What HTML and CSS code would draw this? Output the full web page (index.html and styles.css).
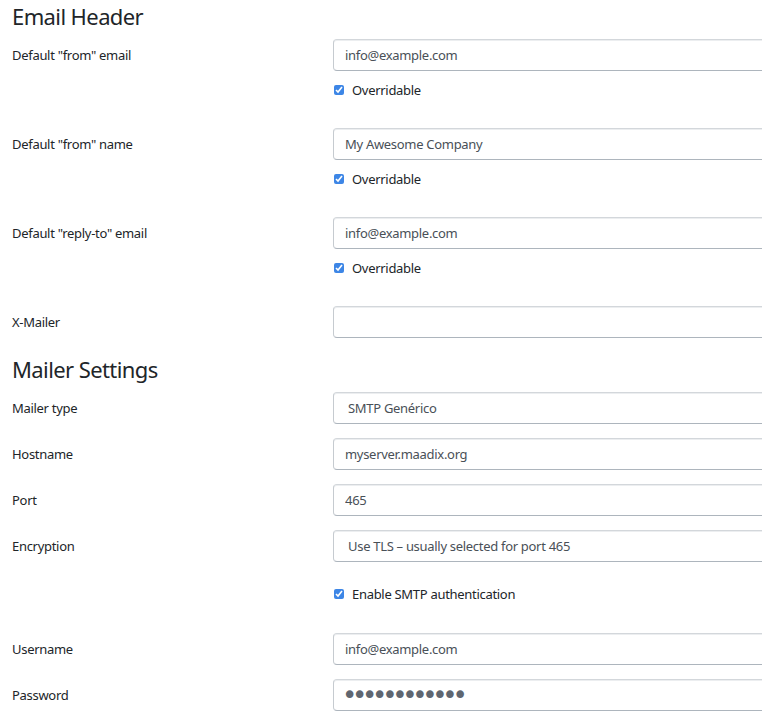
FILE: index.html
```html
<!DOCTYPE html>
<html lang="en">
<head>
    <meta charset="UTF-8">
    <meta name="viewport" content="width=device-width, initial-scale=1.0">
    <title>Mail Settings</title>
    <link rel="stylesheet" href="styles.css">
</head>
<body>
    <main class="settings">
        <h3 class="section-title">Email Header</h3>

        <div class="field field-check">
            <label class="field-label" for="from-email">Default "from" email</label>
            <div class="field-control">
                <input class="form-control" type="text" id="from-email" value="info@example.com">
                <label class="check"><input type="checkbox" checked> Overridable</label>
            </div>
        </div>

        <div class="field field-check">
            <label class="field-label" for="from-name">Default "from" name</label>
            <div class="field-control">
                <input class="form-control" type="text" id="from-name" value="My Awesome Company">
                <label class="check"><input type="checkbox" checked> Overridable</label>
            </div>
        </div>

        <div class="field field-check">
            <label class="field-label" for="reply-to">Default "reply-to" email</label>
            <div class="field-control">
                <input class="form-control" type="text" id="reply-to" value="info@example.com">
                <label class="check"><input type="checkbox" checked> Overridable</label>
            </div>
        </div>

        <div class="field">
            <label class="field-label" for="x-mailer">X-Mailer</label>
            <div class="field-control">
                <input class="form-control" type="text" id="x-mailer" value="">
            </div>
        </div>

        <h3 class="section-title">Mailer Settings</h3>

        <div class="field">
            <label class="field-label" for="mailer-type">Mailer type</label>
            <div class="field-control">
                <select class="form-control form-select" id="mailer-type">
                    <option>SMTP Genérico</option>
                </select>
            </div>
        </div>

        <div class="field">
            <label class="field-label" for="hostname">Hostname</label>
            <div class="field-control">
                <input class="form-control" type="text" id="hostname" value="myserver.maadix.org">
            </div>
        </div>

        <div class="field">
            <label class="field-label" for="port">Port</label>
            <div class="field-control">
                <input class="form-control" type="text" id="port" value="465">
            </div>
        </div>

        <div class="field">
            <label class="field-label" for="encryption">Encryption</label>
            <div class="field-control">
                <select class="form-control form-select" id="encryption">
                    <option>Use TLS – usually selected for port 465</option>
                </select>
            </div>
        </div>

        <div class="field field-auth">
            <span class="field-label"></span>
            <div class="field-control">
                <label class="check"><input type="checkbox" checked> Enable SMTP authentication</label>
            </div>
        </div>

        <div class="field">
            <label class="field-label" for="username">Username</label>
            <div class="field-control">
                <input class="form-control" type="text" id="username" value="info@example.com">
            </div>
        </div>

        <div class="field">
            <label class="field-label" for="password">Password</label>
            <div class="field-control">
                <input class="form-control form-password" type="password" id="password" value="secretpass12">
            </div>
        </div>
    </main>
</body>
</html>
```

FILE: styles.css
```css
html, body {
    overflow: hidden;
}
body {
    font-family: 'Noto Sans', 'DejaVu Sans', sans-serif;
    font-size: 13px;
    letter-spacing: -0.3px;
    margin: 0;
    padding: 0;
    background-color: #ffffff;
    color: #212529;
}
.settings {
    width: 820px;
    padding: 0 12px;
    box-sizing: border-box;
}
.section-title {
    margin: 0 0 9px;
    padding-top: 2px;
    font-size: 22px;
    line-height: 28px;
    font-weight: 400;
    letter-spacing: -0.6px;
    color: #212529;
}
.field + .section-title {
    padding-top: 3px;
}
.field {
    display: grid;
    grid-template-columns: 321px 1fr;
    margin-bottom: 14px;
}
.field-check {
    margin-bottom: 29px;
}
.field-auth {
    padding: 8px 0 15px;
}
.field-label {
    line-height: 32px;
    color: #212529;
}
.form-control {
    display: block;
    width: 100%;
    height: 32px;
    padding: 0 11px;
    font-family: inherit;
    font-size: 13px;
    letter-spacing: -0.3px;
    color: #495057;
    background: #ffffff;
    border: 1px solid #c6cbd0;
    border-top-color: #d3d7db;
    border-bottom-color: #adb5bd;
    border-radius: 4px;
    box-shadow: inset 0 1px 0 #eceef0;
    box-sizing: border-box;
}
.form-select {
    appearance: none;
    padding-left: 14px;
}
.form-password {
    font-family: 'DejaVu Sans', sans-serif;
    font-size: 26px;
    letter-spacing: -5.3px;
    padding-left: 8px;
    color: #5f6670;
}
.check {
    display: flex;
    align-items: center;
    gap: 8px;
    height: 20px;
    margin-top: 9px;
    color: #212529;
}
.field-auth .check {
    margin-top: 0;
}
.field-check .field-control {
    margin-bottom: -1px;
}
.check input {
    width: 10px;
    height: 10px;
    margin: 0 0 0 1px;
    accent-color: #3d86e6;
}
```
